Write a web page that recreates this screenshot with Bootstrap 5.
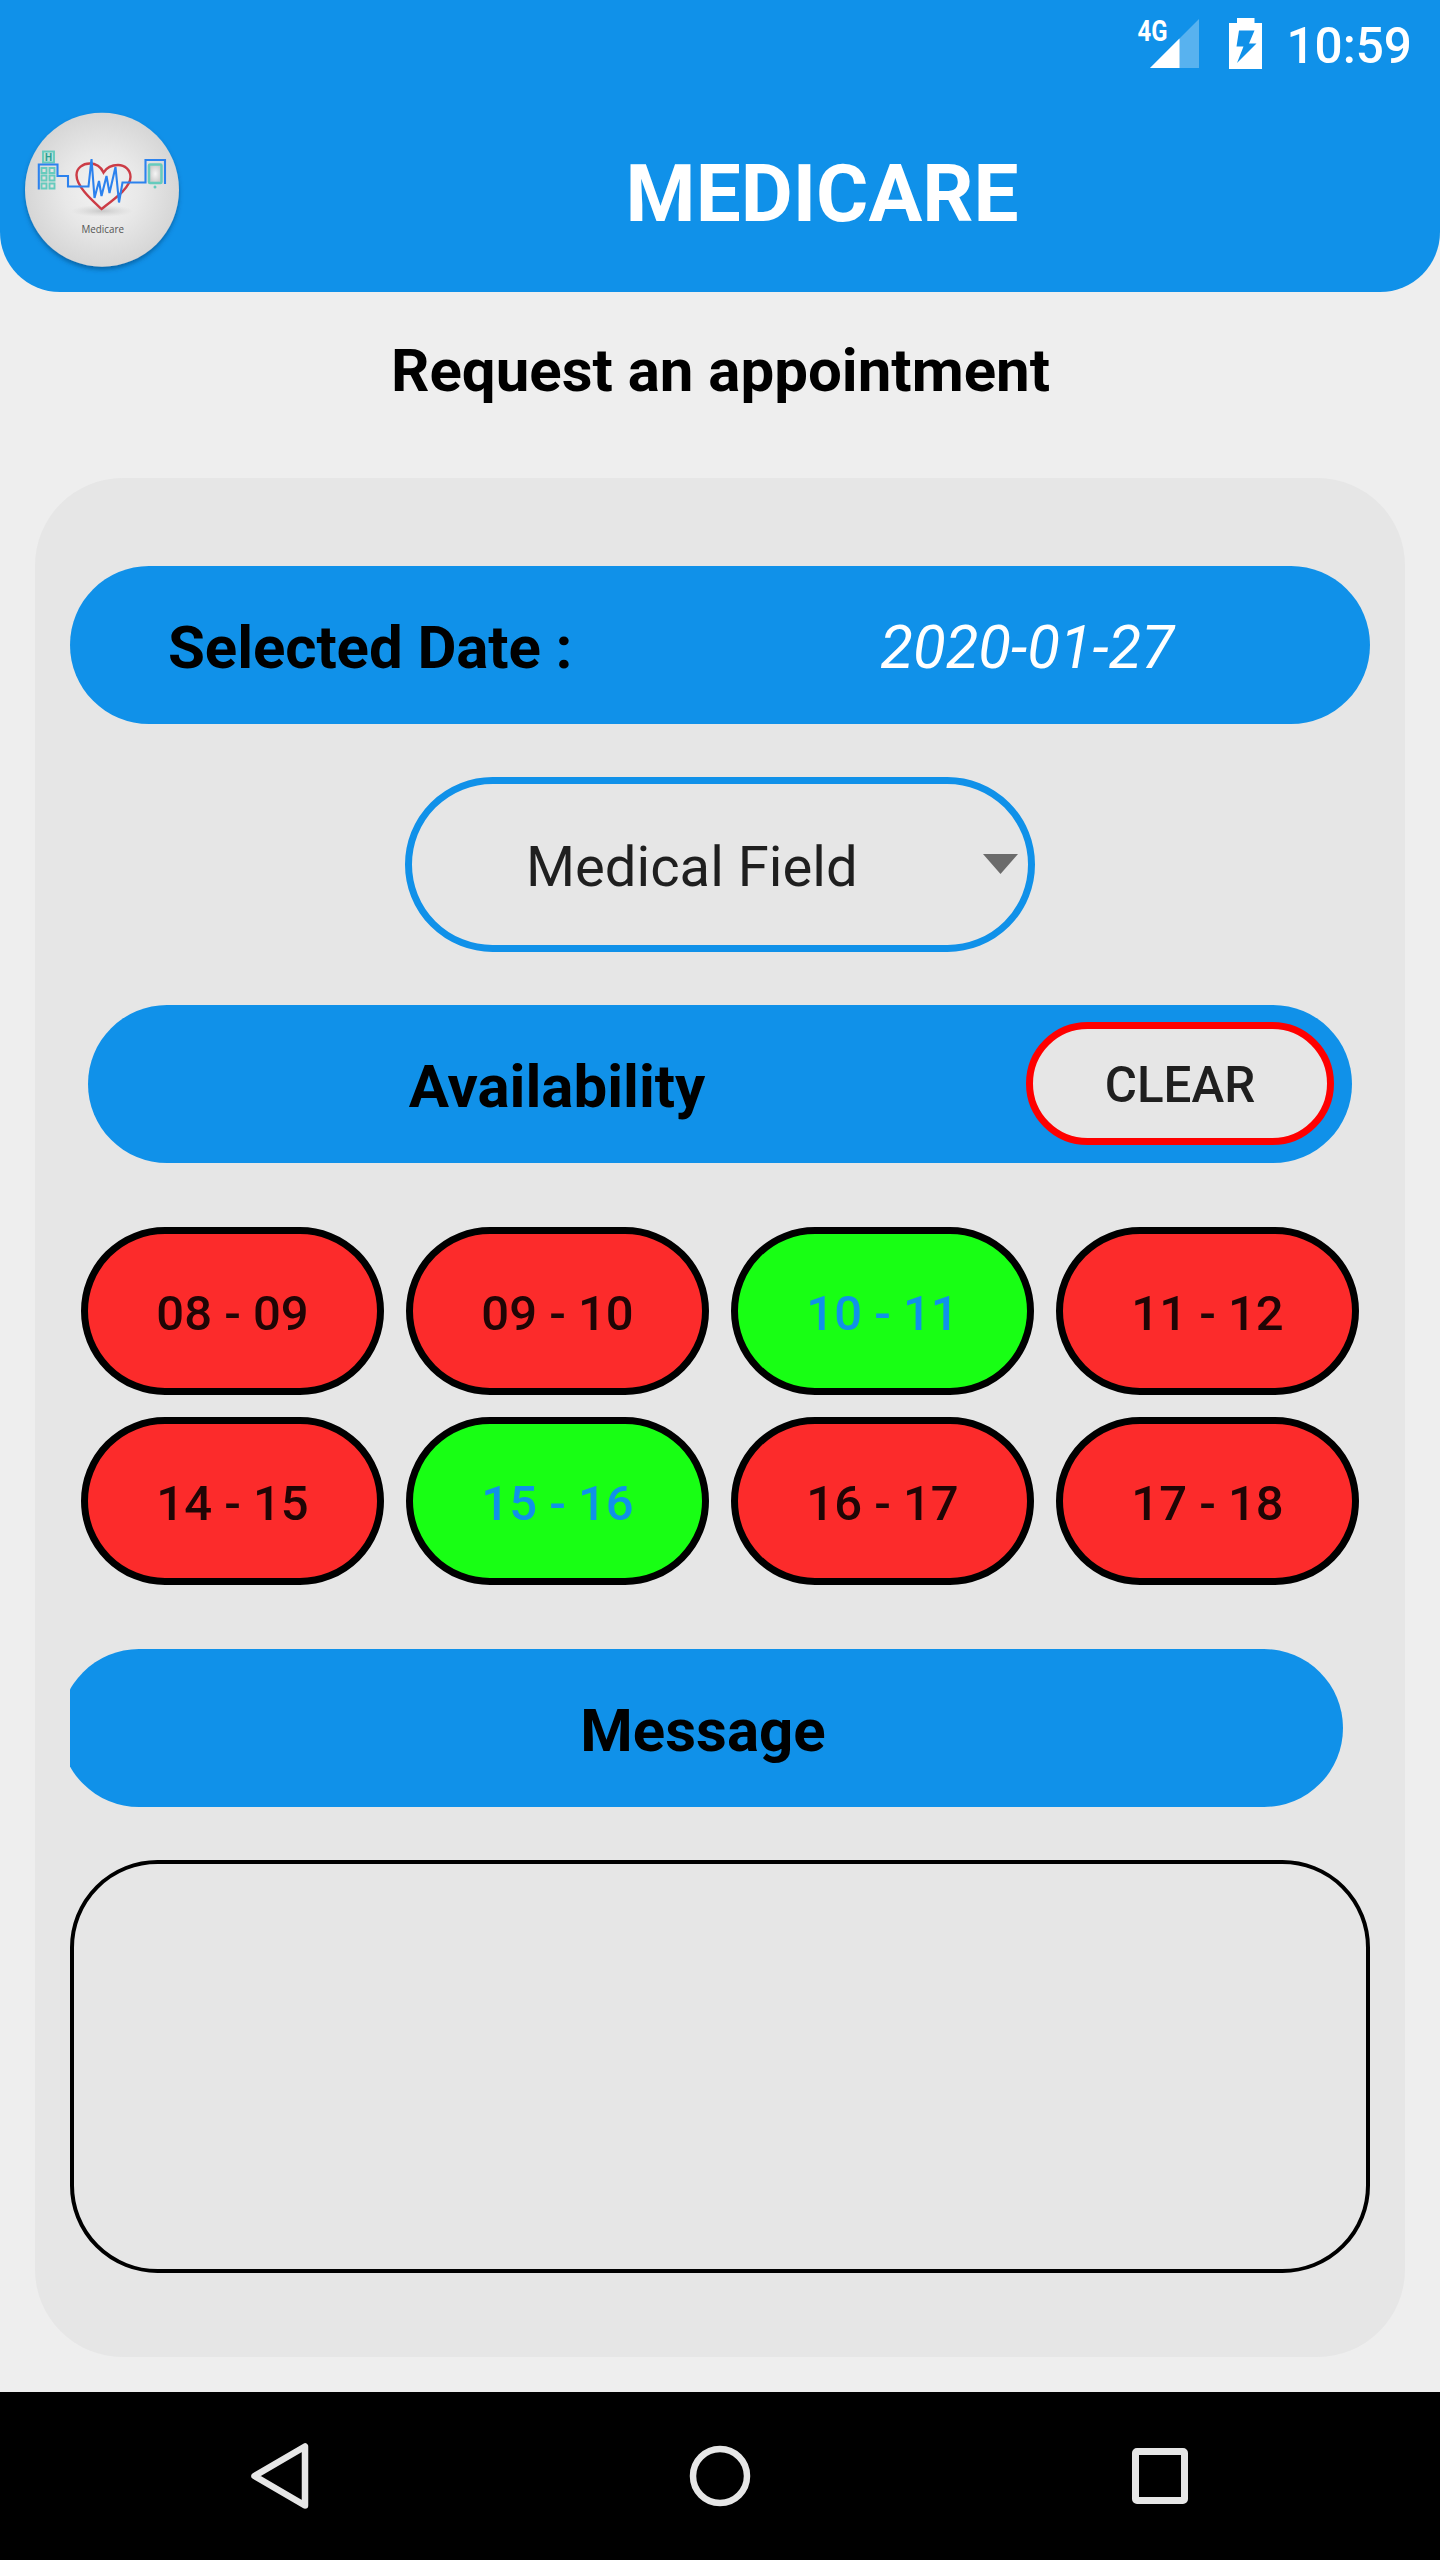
<!DOCTYPE html>
<html lang="en">
<head>
<meta charset="utf-8">
<meta name="viewport" content="width=device-width, initial-scale=1">
<title>Medicare</title>
<link href="https://cdn.jsdelivr.net/npm/bootstrap@5.3.0/dist/css/bootstrap.min.css" rel="stylesheet">
<style>
  :root { --brand: #1091e9; --panel: #e6e6e6; }
  body { font-family: Roboto, "Liberation Sans", sans-serif; background: #eee; color: #000; line-height: 1; }
  .app-screen { width: 1440px; height: 2560px; overflow: hidden; }
  .app-header { background: var(--brand); height: 292px; border-radius: 0 0 60px 60px; color: #fff; }
  .status-bar { height: 84px; padding-right: 28px; }
  .status-time { font-size: 49.5px; font-weight: 500; padding-top: 10px; margin-left: 20px; }
  .brand-row { height: 208px; padding-left: 17px; }
  .brand-title { font-size: 80px; font-weight: 700; padding: 11px 0 0; margin-left: 17px; }
  .page-title { font-size: 60px; font-weight: 700; height: 186px; padding: 43px 0 0 1px; }
  .form-panel { background: var(--panel); margin: 0 35px; height: 1879px; border-radius: 87.5px; padding: 88px 35px 0; }
  .pill-bar { background: var(--brand); height: 158px; border-radius: 79px; font-size: 60px; font-weight: 700; }
  .pill-bar span { padding-top: 5px; }
  .date-label { margin-left: 98px; letter-spacing: -.1px; }
  .date-value { font-weight: 400; font-style: italic; color: #fff; margin-right: 196px; }
  .field-select { width: 630px; height: 175px; border: 7px solid var(--brand); border-radius: 87.5px; margin-top: 53px; padding: 5px 10px 0 114px; font-size: 56.2px; color: #1f1f1f; background: none; }
  .field-select svg { margin-top: -6px; }
  .avail-bar { margin: 53px 18px 0; padding-right: 18px; }
  .btn-clear { width: 308px; height: 123px; border: 7px solid #f00; border-radius: 62px; background: var(--panel); font-size: 49.3px; font-weight: 500; line-height: 1; color: #1f1f1f; padding: 5px 0 0; margin-bottom: 2px; }
  .slot-grid { display: grid; grid-template-columns: repeat(4, 303px); gap: 22px; margin: 64px 0 0 11px; }
  .slot { height: 168px; border: 7px solid #000; border-radius: 84px; background: #fc2b2b; color: #200505; font-size: 49px; font-weight: 500; line-height: 1; padding: 5px 0 0; }
  .slot-free { background: #18ff14; color: var(--brand); }
  .message-clip { margin-top: 64px; }
  .message-bar { margin-left: -10px; width: 1283px; padding-left: 3px; }
  .message-input { display: block; height: 413px; border: 4px solid #000; border-radius: 87.5px; background: transparent; margin-top: 53px; resize: none; padding: 60px; outline: none; }
  .nav-keys { background: #000; height: 168px; margin-top: 35px; padding: 0 245px 0 244px; }
</style>
</head>
<body>
<div class="app-screen">
  <header class="app-header">
    <div class="status-bar d-flex justify-content-end align-items-center">
      <svg width="130" height="84" viewBox="1136 0 130 84" aria-hidden="true">
        <text x="1137.5" y="41" font-family="Roboto" font-weight="700" font-size="29.5" fill="#fff" textLength="30" lengthAdjust="spacingAndGlyphs">4G</text>
        <path d="M1150 68 1199 19V68z" fill="#fff" fill-opacity=".3"/>
        <path d="M1150 68 1179.5 38.5V68z" fill="#fff"/>
        <path fill="#fff" fill-rule="evenodd" d="M1237 18h17.5v5h7.500v46h-33v-46h8zM1239 30.500 1236.500 46.500H1243.500L1237 63 1256.500 43.500H1249L1254.500 30.500z"/>
      </svg>
      <span class="status-time">10:59</span>
    </div>
    <div class="brand-row d-flex align-items-center">
      <svg class="flex-shrink-0" width="170" height="208" viewBox="17 84 170 208" role="img" aria-label="Medicare logo">
        <defs>
          <radialGradient id="disc"><stop offset="0" stop-color="#f3f3f3"/><stop offset=".5" stop-color="#e8e8e8"/><stop offset="1" stop-color="#d6d6d6"/></radialGradient>
          <radialGradient id="shade"><stop offset="0" stop-color="#bbb" stop-opacity=".75"/><stop offset="1" stop-color="#ccc" stop-opacity="0"/></radialGradient>
          <radialGradient id="glass"><stop offset="0" stop-color="#f5f5f5"/><stop offset="1" stop-color="#ccc"/></radialGradient>
          <filter id="drop" x="-10%" y="-10%" width="120%" height="125%"><feDropShadow dx="0" dy="3" stdDeviation="2" flood-color="#003a6b" flood-opacity=".5"/></filter>
        </defs>
        <circle cx="102" cy="189.700" r="77" fill="url(#disc)" filter="url(#drop)"/>
        <ellipse cx="102" cy="211" rx="31" ry="6" fill="url(#shade)"/>
        <g fill="none" stroke="#66cbbd" stroke-width="1.900">
          <rect x="43" y="151.500" width="11" height="11" fill="#bfe0da"/>
          <path d="M41.500 168h5v5h-5zM49.500 168h5v5h-5zM41.500 175.500h5v5h-5zM49.500 175.500h5v5h-5zM41.500 183.500h5v5h-5zM49.500 183.500h5v5h-5z"/>
          <rect x="149" y="164.500" width="12.500" height="18.500" rx="1" stroke-width="2.500" fill="url(#glass)"/>
        </g>
        <circle cx="155" cy="187" r="1.500" fill="#66cbbd"/>
        <text x="48.500" y="161" text-anchor="middle" font-family="Roboto" font-weight="700" font-size="10" fill="#2c9f91">H</text>
        <path d="M101.500 209C93 201 76.500 187 76.500 175C76.500 168 83 163.500 89.500 163.500C96 163.500 101 167 103.500 172.500C107 167 112 165 118 165C125 165 130.500 170 130.500 177C130.500 188 113 200 101.500 209z" fill="none" stroke="#cc3c46" stroke-width="2.400"/>
        <path d="M38.800 189.500V164.500H57.500V176H68V186.500H88.500L91.500 159 94.500 198 99 181 101.500 196 106.500 176 109.500 193 115.500 167 119 202.500 122.500 182.500H145.500V160H165V184" fill="none" stroke="#2c82ee" stroke-width="2.100"/>
        <text x="81.500" y="232.500" font-family="Open Sans" font-size="11.500" font-weight="500" fill="#555" textLength="42.500" lengthAdjust="spacingAndGlyphs">Medicare</text>
      </svg>
      <h1 class="brand-title mb-0 flex-grow-1 text-center">MEDICARE</h1>
    </div>
  </header>

  <main>
    <h2 class="page-title text-center mb-0">Request an appointment</h2>
    <section class="form-panel">
      <div class="pill-bar d-flex align-items-center justify-content-between">
        <span class="date-label">Selected Date :</span>
        <span class="date-value">2020-01-27</span>
      </div>

      <button type="button" class="field-select d-flex align-items-center justify-content-between mx-auto">
        <span>Medical Field</span>
        <svg width="35" height="20" viewBox="0 0 35 20" aria-hidden="true"><path d="M0 0h35L17.500 20z" fill="#6b6b6b"/></svg>
      </button>

      <div class="pill-bar avail-bar d-flex align-items-center">
        <span class="flex-grow-1 text-center">Availability</span>
        <button type="button" class="btn-clear">CLEAR</button>
      </div>

      <div class="slot-grid">
        <button type="button" class="slot">08 - 09</button>
        <button type="button" class="slot">09 - 10</button>
        <button type="button" class="slot slot-free">10 - 11</button>
        <button type="button" class="slot">11 - 12</button>
        <button type="button" class="slot">14 - 15</button>
        <button type="button" class="slot slot-free">15 - 16</button>
        <button type="button" class="slot">16 - 17</button>
        <button type="button" class="slot">17 - 18</button>
      </div>

      <div class="message-clip overflow-hidden">
        <div class="pill-bar message-bar d-flex align-items-center justify-content-center"><span>Message</span></div>
      </div>
      <textarea class="message-input w-100" aria-label="Message"></textarea>
    </section>
  </main>

  <footer class="nav-keys d-flex justify-content-between align-items-center">
    <svg width="70" height="70" viewBox="0 0 70 70" fill="none" stroke="#e6e6e6" stroke-width="6.500" stroke-linejoin="round"><path d="M61 5.500V64.500L10.500 35z"/></svg>
    <svg width="70" height="70" viewBox="0 0 70 70" fill="none" stroke="#e6e6e6" stroke-width="6.500"><circle cx="35" cy="35" r="27"/></svg>
    <svg width="70" height="70" viewBox="0 0 70 70" fill="none" stroke="#e6e6e6" stroke-width="7"><rect x="10.500" y="10.500" width="49" height="49" rx="1.500"/></svg>
  </footer>
</div>
<script src="https://cdn.jsdelivr.net/npm/bootstrap@5.3.0/dist/js/bootstrap.bundle.min.js"></script>
</body>
</html>
